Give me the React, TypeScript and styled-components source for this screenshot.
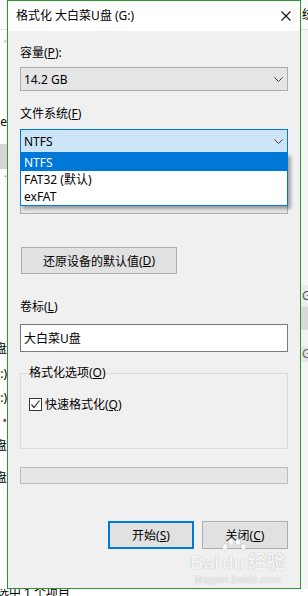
import * as React from 'react';
import styled, {createGlobalStyle} from 'styled-components';

const GlobalStyle = createGlobalStyle`
  html, body {
    margin: 0;
    padding: 0;
  }
  body {
    width: 308px;
    height: 596px;
    overflow: hidden;
    background: #ffffff;
    font-family: "Noto Sans", "Noto Sans CJK SC", sans-serif;
    font-size: 12px;
    color: #000000;
  }
`;

interface StripRow {
    h: number;
    text?: string;
    bg?: string;
    color?: string;
    line?: boolean;
}

const leftRows: StripRow[] = [
    {h: 29, bg: '#fafafa', line: true},
    {h: 10},
    {h: 12, text: '˄', color: '#8a8a8a'},
    {h: 62},
    {h: 16, text: 'le'},
    {h: 14},
    {h: 25, bg: '#d5d5d5'},
    {h: 16, text: '·', color: '#1ab0c8'},
    {h: 156},
    {h: 16, text: 'U盘'},
    {h: 9},
    {h: 16, text: ':)'},
    {h: 8},
    {h: 16, text: ':)'},
    {h: 7},
    {h: 16, text: '•', color: '#b0206a'},
    {h: 9},
    {h: 16, text: '盘'},
    {h: 16},
    {h: 16, text: '盘'},
    {h: 96},
];

const rightRows: StripRow[] = [
    {h: 29, bg: '#fafafa', text: '统', line: true},
    {h: 255, bg: '#f5f5f5'},
    {h: 22, bg: '#ececec', text: 'GB', color: '#555555'},
    {h: 22, bg: '#d9d9d9', line: true},
    {h: 16, bg: '#f3f3f3'},
    {h: 16, bg: '#e6e6e6', text: 'G', color: '#666666'},
    {h: 229, bg: '#f5f5f5'},
];

const fsOptions = ['NTFS', 'FAT32 (默认)', 'exFAT'];

export default function App() {
    return (
        <>
            <GlobalStyle/>
            <Screen>
                <Strip>
                    {leftRows.map((row, i) => (
                        <StripCell key={i} $h={row.h} $bg={row.bg} $color={row.color} $line={row.line} $side='left'>
                            {row.text}
                        </StripCell>
                    ))}
                </Strip>
                <Dialog>
                    <TitleBar>
                        <span>格式化 大白菜U盘 (G:)</span>
                        <CloseBox>
                            <svg width='10' height='10' viewBox='0 0 10 10'>
                                <path d='M0.5 0.5 L9.5 9.5 M9.5 0.5 L0.5 9.5' stroke='#111' strokeWidth='1.1'/>
                            </svg>
                        </CloseBox>
                    </TitleBar>
                    <Body>
                        <Label $mt={14}>容量(<u>P</u>):</Label>
                        <Combo $mt={6}>
                            <span>14.2 GB</span>
                            <Chevron/>
                        </Combo>
                        <Label $mt={15}>文件系统(<u>F</u>)</Label>
                        <ComboWrap $mt={7}>
                            <Combo $focused>
                                <span>NTFS</span>
                                <Chevron/>
                            </Combo>
                            <DropList>
                                {fsOptions.map((opt, i) => (
                                    <DropItem key={opt} $selected={i === 0}>{opt}</DropItem>
                                ))}
                            </DropList>
                        </ComboWrap>
                        {/* allocation-size row sits under the open list */}
                        <Label $mt={15} aria-hidden/>
                        <Combo $mt={6}>
                            <span/>
                            <Chevron/>
                        </Combo>
                        <RestoreButton>还原设备的默认值(<u>D</u>)</RestoreButton>
                        <Label $mt={25}>卷标(<u>L</u>)</Label>
                        <TextInput>大白菜U盘</TextInput>
                        <Group>
                            <Legend>格式化选项(<u>O</u>)</Legend>
                            <CheckRow>
                                <CheckBox>
                                    <svg width='11' height='11' viewBox='0 0 11 11'>
                                        <polyline points='1.5,5.5 4,8.5 9.5,1.5' fill='none' stroke='#333' strokeWidth='1.2'/>
                                    </svg>
                                </CheckBox>
                                <span>快速格式化(<u>Q</u>)</span>
                            </CheckRow>
                        </Group>
                        <Progress/>
                        <ButtonRow>
                            <DialogButton $default>开始(<u>S</u>)</DialogButton>
                            <DialogButton>关闭(<u>C</u>)</DialogButton>
                        </ButtonRow>
                    </Body>
                </Dialog>
                <Strip>
                    {rightRows.map((row, i) => (
                        <StripCell key={i} $h={row.h} $bg={row.bg} $color={row.color} $line={row.line} $side='right'>
                            {row.text}
                        </StripCell>
                    ))}
                </Strip>
                <StatusBar>
                    <span>选中 1 个项目</span>
                </StatusBar>
                <Watermark>
                    <WatermarkLine>
                        <span>Bai</span>
                        <PawMark>
                            <svg width='26' height='14' viewBox='0 0 26 14'>
                                <ellipse cx='4' cy='9' rx='2.6' ry='3.2'/>
                                <ellipse cx='10' cy='4' rx='2.6' ry='3.4'/>
                                <ellipse cx='17' cy='4' rx='2.6' ry='3.4'/>
                                <ellipse cx='22.5' cy='9' rx='2.6' ry='3.2'/>
                            </svg>
                            <span>du</span>
                        </PawMark>
                        <span>经验</span>
                    </WatermarkLine>
                    <WatermarkUrl>jingyan.baidu.com</WatermarkUrl>
                </Watermark>
            </Screen>
        </>
    );
}

const Chevron = () => (
    <ChevronSvg width='9' height='5' viewBox='0 0 9 5'>
        <polyline points='0.5,0.5 4.5,4.5 8.5,0.5' fill='none' stroke='#3c3c3c' strokeWidth='1'/>
    </ChevronSvg>
);

const Screen = styled.div`
  position: relative;
  display: grid;
  grid-template-columns: 7px 294px 7px;
  grid-template-rows: 589px 7px;
  width: 308px;
  height: 596px;
  overflow: hidden;
  background: #ffffff;
`;

const Strip = styled.div`
  display: flex;
  flex-direction: column;
  overflow: hidden;
  background: #ffffff;
`;

const StripCell = styled.div<{ $h: number; $bg?: string; $color?: string; $line?: boolean; $side: 'left' | 'right' }>`
  flex: 0 0 ${p => p.$h}px;
  display: flex;
  align-items: center;
  justify-content: ${p => (p.$side === 'left' ? 'flex-end' : 'flex-start')};
  padding-left: ${p => (p.$side === 'right' ? '1px' : '0')};
  white-space: nowrap;
  overflow: hidden;
  line-height: 16px;
  background: ${p => p.$bg || 'transparent'};
  color: ${p => p.$color || '#000000'};
  border-bottom: ${p => (p.$line ? '1px solid #e1e1e1' : 'none')};
  box-sizing: content-box;
`;

const Dialog = styled.div`
  display: flex;
  flex-direction: column;
  box-sizing: border-box;
  height: 589px;
  background: #f0f0f0;
  border: 1px solid #2e962e;
`;

const TitleBar = styled.div`
  display: flex;
  align-items: center;
  justify-content: space-between;
  flex: 0 0 30px;
  padding-left: 8px;
  background: #ffffff;
  line-height: 16px;
`;

const CloseBox = styled.div`
  display: flex;
  align-items: center;
  justify-content: center;
  width: 28px;
  height: 30px;
`;

const Body = styled.div`
  display: flex;
  flex-direction: column;
  padding: 0 12px;
`;

const Label = styled.div<{ $mt: number }>`
  height: 16px;
  line-height: 16px;
  margin-top: ${p => p.$mt}px;
  white-space: nowrap;
`;

const Combo = styled.div<{ $mt?: number; $focused?: boolean }>`
  display: flex;
  align-items: center;
  justify-content: space-between;
  box-sizing: border-box;
  height: 24px;
  margin-top: ${p => p.$mt || 0}px;
  padding: 0 3px;
  background: ${p => (p.$focused ? '#cce4f7' : '#e5e5e5')};
  border: 1px solid ${p => (p.$focused ? '#0078d7' : '#adadad')};
  white-space: nowrap;
`;

const ChevronSvg = styled.svg`
  flex: none;
  margin-right: 1px;
`;

const ComboWrap = styled.div<{ $mt: number }>`
  position: relative;
  margin-top: ${p => p.$mt}px;
  z-index: 2;
`;

const DropList = styled.div`
  position: absolute;
  top: 100%;
  left: 0;
  right: 0;
  background: #ffffff;
  border: 1px solid #0078d7;
  border-top: none;
  box-shadow: 3px 3px 3px rgba(0, 0, 0, 0.3);
`;

const DropItem = styled.div<{ $selected?: boolean }>`
  height: 17px;
  line-height: 17px;
  padding-left: 3px;
  background: ${p => (p.$selected ? '#0078d7' : '#ffffff')};
  color: ${p => (p.$selected ? '#ffffff' : '#000000')};
  white-space: nowrap;

  &:first-child {
    height: 18px;
    line-height: 19px;
  }
`;

const RestoreButton = styled.div`
  display: flex;
  align-items: center;
  justify-content: center;
  box-sizing: border-box;
  width: 156px;
  height: 27px;
  margin: 33px 0 0 1px;
  background: #e1e1e1;
  border: 1px solid #adadad;
  white-space: nowrap;
`;

const TextInput = styled.div`
  display: flex;
  align-items: center;
  box-sizing: border-box;
  height: 28px;
  margin-top: 9px;
  padding-left: 3px;
  background: #ffffff;
  border: 1px solid #7a7a7a;
`;

const Group = styled.fieldset`
  box-sizing: border-box;
  height: 84px;
  min-width: 0;
  margin: 13px 0 0;
  padding: 0 7px;
  border: 1px solid #dcdcdc;
`;

const Legend = styled.legend`
  padding: 0 1px;
  line-height: 16px;
  white-space: nowrap;
`;

const CheckRow = styled.div`
  display: flex;
  align-items: center;
  gap: 3px;
  height: 13px;
  margin-top: 17px;
  line-height: 16px;
  white-space: nowrap;
`;

const CheckBox = styled.div`
  display: flex;
  align-items: center;
  justify-content: center;
  box-sizing: border-box;
  width: 13px;
  height: 13px;
  margin-left: 1px;
  background: #ffffff;
  border: 1px solid #333333;
`;

const Progress = styled.div`
  box-sizing: border-box;
  height: 17px;
  margin-top: 18px;
  background: #e6e6e6;
  border: 1px solid #bcbcbc;
`;

const ButtonRow = styled.div`
  display: flex;
  justify-content: flex-end;
  gap: 8px;
  margin-top: 37px;
`;

const DialogButton = styled.div<{ $default?: boolean }>`
  display: flex;
  align-items: center;
  justify-content: center;
  box-sizing: border-box;
  width: 86px;
  height: 28px;
  background: #e1e1e1;
  border: ${p => (p.$default ? '2px solid #0078d7' : '1px solid #adadad')};
  white-space: nowrap;
`;

const StatusBar = styled.div`
  grid-column: 1 / -1;
  overflow: hidden;
  background: #ffffff;

  span {
    display: block;
    margin: -3px 0 0 -3px;
    line-height: 14px;
    white-space: nowrap;
  }
`;

const Watermark = styled.div`
  position: absolute;
  left: 190px;
  top: 538px;
  display: flex;
  flex-direction: column;
  align-items: center;
  color: rgba(255, 255, 255, 0.9);
  text-shadow: 0 0 1px rgba(0, 0, 0, 0.35);
  pointer-events: none;
`;

const WatermarkLine = styled.div`
  display: flex;
  align-items: flex-end;
  font-family: "Liberation Sans", "Noto Sans CJK SC", sans-serif;
  font-size: 19px;
  font-weight: bold;
  line-height: 22px;
`;

const PawMark = styled.span`
  display: flex;
  flex-direction: column;
  align-items: center;
  margin: 0 1px;

  svg {
    fill: rgba(255, 255, 255, 0.9);
    stroke: rgba(0, 0, 0, 0.2);
    stroke-width: 0.6;
  }
`;

const WatermarkUrl = styled.div`
  font-family: "Liberation Sans", sans-serif;
  font-size: 10px;
  line-height: 11px;
  letter-spacing: 0.3px;
`;
